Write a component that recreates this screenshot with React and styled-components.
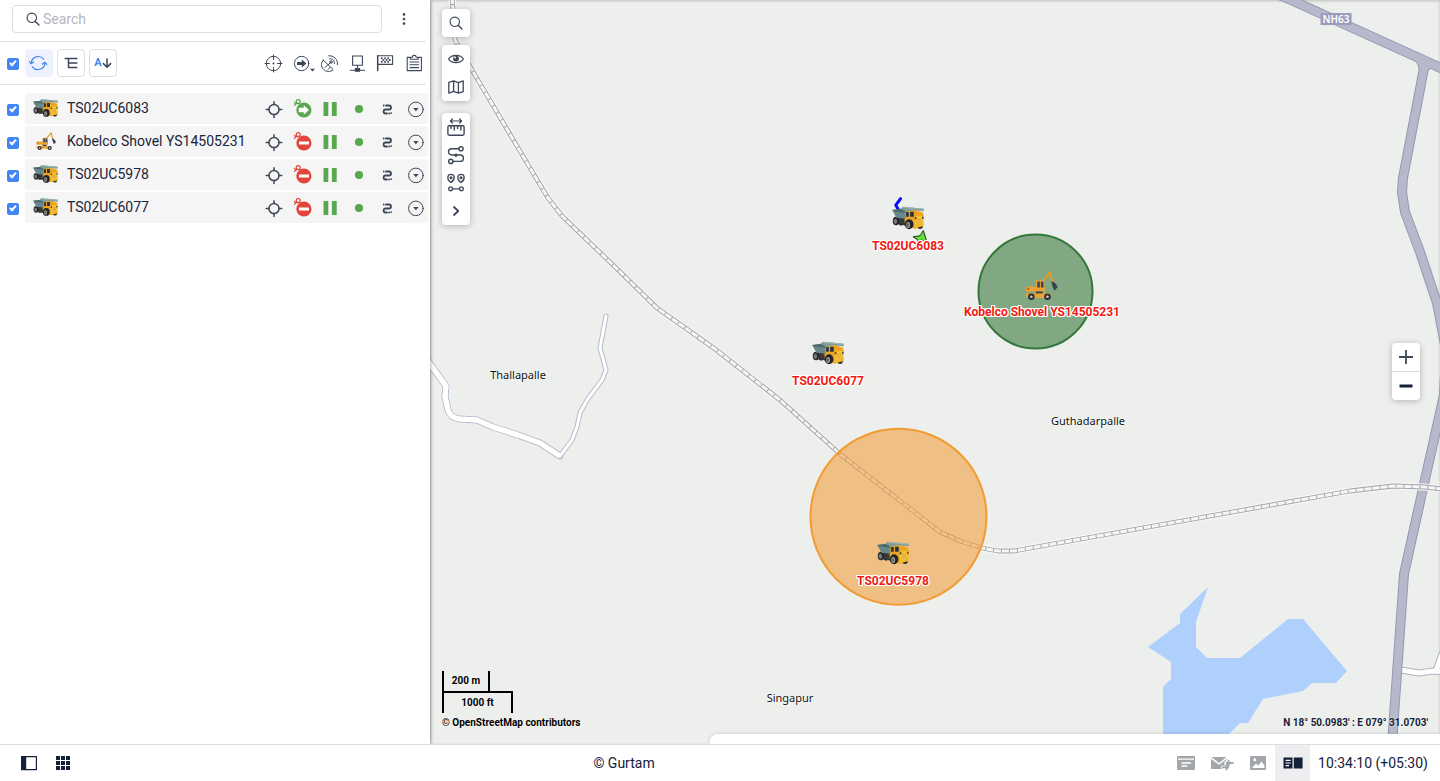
import React from 'react';
import styled, { createGlobalStyle, css } from 'styled-components';

const ink = '#3d4757';
const dark = '#14203a';
const blue = '#4285f4';
const green = '#57a84f';
const red = '#e2453a';

const GlobalStyle = createGlobalStyle`
  *, *::before, *::after { box-sizing: border-box; }
  body {
    margin: 0;
    font-family: Roboto, "Liberation Sans", sans-serif;
    font-size: 14px;
    line-height: 20px;
    color: ${dark};
    background: #fff;
  }
  button, input { font: inherit; color: inherit; }
`;

/* ---------- layout ---------- */

const Page = styled.div`
  display: grid;
  grid-template-rows: 1fr auto;
  height: 100vh;
`;

const Workspace = styled.main`
  display: grid;
  grid-template-columns: 430px 1fr;
  min-height: 0;
`;

const SidePanel = styled.aside`
  position: relative;
  z-index: 1;
  background: #fff;
  box-shadow: 0 0 4px rgba(0, 0, 0, 0.5);
`;

const SearchBar = styled.div`
  display: flex;
  align-items: center;
  gap: 8px;
  padding: 5px 8px 8px 12px;
  margin-right: 4px;
  border-bottom: 1px solid #e0e1e3;
`;

const SearchField = styled.label`
  display: flex;
  flex: 1;
  align-items: center;
  gap: 3px;
  height: 28px;
  padding: 0 13px;
  border: 1px solid #dedfe1;
  border-radius: 4px;
  color: ${ink};
`;

const SearchInput = styled.input`
  flex: 1;
  min-width: 0;
  padding: 0;
  border: 0;
  outline: 0;
  background: none;
  &::placeholder { color: #b4b7bc; opacity: 1; }
`;

const IconButton = styled.button`
  display: flex;
  align-items: center;
  justify-content: center;
  flex: none;
  width: 28px;
  height: 28px;
  padding: 0;
  border: 0;
  background: none;
  color: ${ink};
  cursor: pointer;
`;

const ToolButton = styled(IconButton)`
  border: 1px solid ${(p) => (p.$active ? '#edf2fe' : '#dedfe1')};
  border-radius: 4px;
  background: ${(p) => (p.$active ? '#edf2fe' : '#fff')};
  color: ${(p) => (p.$active ? blue : ink)};
`;

const Toolbar = styled.div`
  display: flex;
  align-items: center;
  padding: 7px 0 7px 7px;
  margin-right: 4px;
  border-bottom: 1px solid #e0e1e3;
`;

const ToolGroup = styled.div`
  display: flex;
  flex: 1;
  gap: 4px;
  margin-left: 6px;
`;

const Actions = styled.div`
  display: flex;
  flex: none;
  margin-right: ${(p) => (p.$header ? '-2px' : '0')};
`;

const Checkbox = styled.input`
  appearance: none;
  position: relative;
  flex: none;
  width: 12px;
  height: 12px;
  margin: 2px 0 0;
  border-radius: 2px;
  border: 1px solid ${blue};
  background: #fff;
  &:checked { background: ${blue}; }
  &:checked::after {
    content: '';
    position: absolute;
    left: 3px;
    top: 0;
    width: 4px;
    height: 7px;
    border: solid #fff;
    border-width: 0 2px 2px 0;
    transform: rotate(42deg);
  }
`;

const UnitList = styled.ul`
  display: flex;
  flex-direction: column;
  gap: 2px;
  margin: 0;
  padding: 8px 2px 0 7px;
  list-style: none;
`;

const UnitRow = styled.li`
  display: flex;
  align-items: center;
  gap: 6px;
`;

const UnitCard = styled.div`
  display: flex;
  flex: 1;
  align-items: center;
  height: 31px;
  padding-left: 8px;
  border-radius: 3px;
  background: #f5f5f5;
`;

const UnitName = styled.label`
  display: flex;
  flex: 1;
  align-items: center;
  gap: 9px;
  padding-bottom: 2px;
  color: #1b2438;
`;

/* ---------- map ---------- */

const MapArea = styled.section`
  position: relative;
  overflow: hidden;
  background: #edefec;
  box-shadow: inset 0 1px 3px rgba(0, 0, 0, 0.2);
`;

const MapDrawing = styled.svg`
  position: absolute;
  inset: 0;
  width: 100%;
  height: 100%;
`;

const Pin = styled.div`
  position: absolute;
  left: ${(p) => p.$x}px;
  top: ${(p) => p.$y}px;
  display: flex;
  flex-direction: column;
  align-items: center;
  transform: translateX(-50%);
  white-space: nowrap;
`;

const PinLabel = styled.span`
  margin-top: 4px;
  font-size: 12px;
  line-height: 16px;
  font-weight: 700;
  color: #f01a12;
  text-shadow: 1px 0 #fff, -1px 0 #fff, 0 1px #fff, 0 -1px #fff, 1px 1px #fff, -1px -1px #fff,
    1px -1px #fff, -1px 1px #fff;
`;

const PlaceLabel = styled.span`
  font-family: "Noto Sans", sans-serif;
  font-size: 11px;
  line-height: 16px;
  color: #111;
  text-shadow: 0 0 2px #fff, 0 0 2px #fff;
`;

const RoadShield = styled.span`
  padding: 0 2px;
  font-family: "Noto Sans", sans-serif;
  font-size: 10px;
  line-height: 12px;
  font-weight: 600;
  color: #fff;
  background: #9a9cbc;
`;

const MapTools = styled.div`
  position: absolute;
  left: 12px;
  top: 9px;
  display: flex;
  flex-direction: column;
`;

const ControlGroup = styled.div`
  display: flex;
  flex-direction: column;
  margin-bottom: ${(p) => p.$gap || 0}px;
  border-radius: 4px;
  background: #fff;
  box-shadow: 0 1px 6px rgba(0, 0, 0, 0.25);
`;

const ZoomControls = styled(ControlGroup)`
  position: absolute;
  right: 20px;
  top: calc(50% - 29px);
  ${IconButton} + ${IconButton} {
    height: 29px;
    border-top: 1px solid #dcdddf;
  }
`;

const MapCaption = styled.div`
  position: absolute;
  bottom: 13px;
  ${(p) => (p.$side === 'left' ? css`left: 12px;` : css`right: 12px;`)}
  font-size: 10px;
  line-height: 16px;
  font-weight: 700;
  color: ${(p) => (p.$side === 'left' ? '#000' : dark)};
  text-shadow: 0 0 2px #fff;
`;

const ScaleBar = styled.div`
  width: ${(p) => p.$width}px;
  height: ${(p) => (p.$lower ? 22 : 20)}px;
  border: solid #000;
  border-width: ${(p) => (p.$lower ? '2px 2px 0' : '0 2px')};
  line-height: 20px;
  text-align: center;
`;

const CaptionLink = styled.a`
  display: block;
  margin-top: 2px;
  color: inherit;
  text-decoration: none;
`;

const Drawer = styled.div`
  position: absolute;
  left: 280px;
  right: 0;
  bottom: 0;
  height: 10px;
  border-top-left-radius: 8px;
  background: #fff;
  box-shadow: 0 0 4px rgba(0, 0, 0, 0.15);
`;

/* ---------- footer ---------- */

const Footer = styled.footer`
  display: flex;
  align-items: stretch;
  justify-content: space-between;
  height: 37px;
  padding: 0 12px 0 15px;
  position: relative;
  z-index: 2;
  border-top: 1px solid #dddee1;
  background: #fff;
`;

const FooterGroup = styled.div`
  display: flex;
  align-items: center;
  gap: ${(p) => p.$gap || 0}px;
`;

const Copyright = styled(FooterGroup)`
  padding-left: 4px;
`;

const FooterButton = styled(IconButton)`
  width: ${(p) => (p.$active ? 35 : 36)}px;
  height: 100%;
  padding-left: ${(p) => (p.$active ? 0 : 2)}px;
  background: ${(p) => (p.$active ? '#eeeef0' : 'none')};
  color: ${(p) => (p.$active ? dark : '#a3a6ab')};
`;

const Clock = styled.time`
  margin-left: 8px;
`;

/* ---------- icons ---------- */

const Glyph = ({ size = 28, w, h, box, children, sw = 1.2 }) => (
  <svg
    width={w || size}
    height={h || size}
    viewBox={box || `0 0 ${w || size} ${h || size}`}
    fill="none"
    stroke="currentColor"
    strokeWidth={sw}
    strokeLinecap="round"
    strokeLinejoin="round"
    aria-hidden="true"
  >
    {children}
  </svg>
);

const headerBox = '0 -1 28 28';

const Magnifier = () => (
  <Glyph size={14} sw={1.1}>
    <circle cx="5.8" cy="5.8" r="4.7" />
    <path d="M9.4 9.4L13 13" strokeWidth="1.4" />
  </Glyph>
);

const Kebab = () => (
  <Glyph w={4} h={14}>
    <g fill="currentColor" stroke="none">
      <circle cx="2" cy="2.4" r="1.3" />
      <circle cx="2" cy="7" r="1.3" />
      <circle cx="2" cy="11.6" r="1.3" />
    </g>
  </Glyph>
);

const Refresh = () => (
  <Glyph size={20} box="1 0 20 20">
    <path d="M3.2 9.6A7 7 0 0 1 15.6 6.2M16.9 10.4A7 7 0 0 1 4.4 13.8" />
    <path d="M1.4 8.6L3.1 10.8L5.6 9M14.4 11L16.9 9.2L18.8 11.4" />
  </Glyph>
);

const Tree = () => (
  <Glyph size={20} sw={1.5}>
    <path d="M3.6 5.5H16.4M7.5 5.5V14.5H16.4M7.5 10H16.4" strokeLinecap="butt" />
  </Glyph>
);

const SortLetter = styled.span`
  font-size: 11px;
  line-height: 12px;
  font-weight: 700;
  color: ${blue};
`;

const SortArrow = () => (
  <Glyph w={10} h={12} sw={1.5}>
    <path d="M5 2V10M1.4 6.6L5 10.2L8.6 6.6" />
  </Glyph>
);

const Target = () => (
  <Glyph sw={1} box={headerBox}>
    <circle cx="13.5" cy="13.5" r="7.2" />
    <path d="M13.5 5V9.5M13.5 17.5V22M5 13.5H9.5M17.5 13.5H22" />
    <circle cx="13.5" cy="13.5" r="1" fill="currentColor" stroke="none" />
  </Glyph>
);

const Follow = () => (
  <Glyph sw={1} box={headerBox}>
    <circle cx="13.6" cy="13.5" r="7.2" />
    <path d="M9 12H13.8V9.6L18.4 13.5L13.8 17.4V15H9Z" fill="currentColor" stroke="none" />
    <path d="M22 18.8H27L24.5 21.4Z" fill="currentColor" stroke="none" />
  </Glyph>
);

const Satellite = () => (
  <Glyph sw={1} box={headerBox}>
    <path d="M7.2 10.2L17.2 19.6C14.4 22.4 10 21.9 7.4 19.2C4.8 16.6 4.7 12.8 7.2 10.2Z" />
    <path d="M9.2 17.4L11.4 15.2M12 19.4L14 17.4M12.2 14.8L14.6 12.4" />
    <circle cx="15" cy="12" r="1.2" />
    <path d="M13.6 8.8C16.6 8.2 19 10.8 18.4 13.6M12.6 5.8C17.6 5 22.4 9.8 21.4 14.6" />
  </Glyph>
);

const Network = () => (
  <Glyph sw={1.1} box={headerBox}>
    <path d="M8.6 6H18.4V15.2H8.6Z" />
    <path d="M13.5 15.2V18M6.4 20.3H11.4M15.6 20.3H20.6" />
    <path d="M11.4 18.5H15.6V21.2H11.4Z" fill="currentColor" />
  </Glyph>
);

const CheckeredFlag = () => (
  <Glyph sw={1.1} box={headerBox}>
    <path d="M5.7 5.8V20.6" strokeWidth="1.5" />
    <path d="M5.7 5.8H20.6V14.4H5.7" />
    <g fill="currentColor" stroke="none">
      {[0, 1, 2].map((r) =>
        [0, 1, 2].map((c) => (
          <rect key={`${r}${c}`} x={9 + c * 3.2 + (r % 2) * 1.6} y={7.4 + r * 1.8} width="1.6" height="1.8" />
        ))
      )}
    </g>
  </Glyph>
);

const Clipboard = () => (
  <Glyph sw={1.1} box={headerBox}>
    <path d="M10.4 7.4H7.2V20.6H21.4V7.4H18.2M10.4 9.2V7.2H12.4C12.4 4.8 16.2 4.8 16.2 7.2H18.2V9.2Z" />
    <path d="M10 12H18.6M10 14.8H18.6M10 17.6H18.6" />
  </Glyph>
);

const Locate = () => (
  <Glyph sw={1.5}>
    <circle cx="14" cy="14.6" r="5" />
    <path d="M14 6.8V9.6M14 19.6V22.4M6.2 14.6H9M19 14.6H21.8" />
  </Glyph>
);

const StatusGlyph = ({ moving }) => (
  <Glyph>
    <g stroke={moving ? green : red}>
      <circle cx="10.2" cy="6.6" r="2" />
      <path d="M8.7 8.2L6.4 10.4M6.4 7.4L8 9.2" />
    </g>
    <circle cx="15.9" cy="15" r="7.6" fill={moving ? green : red} stroke="none" />
    {moving ? (
      <path d="M10.8 12.8H15.8V10.2L21 15L15.8 19.8V17.2H10.8Z" fill="#fff" stroke="none" />
    ) : (
      <rect x="11" y="13.5" width="10" height="3" fill="#fff" stroke="none" />
    )}
  </Glyph>
);

const Pause = () => (
  <Glyph>
    <path d="M7.5 7H12.3V21H7.5ZM15.9 7H20.7V21H15.9Z" fill={green} stroke="none" />
  </Glyph>
);

const Dot = () => (
  <Glyph>
    <circle cx="15" cy="14" r="4.1" fill={green} stroke="none" />
  </Glyph>
);

const Track = () => (
  <Glyph sw={1.8}>
    <path d="M14 10.5H17A2 2 0 0 1 17 14.5H13.6A2 2 0 0 0 13.6 18.5H15" />
    <g fill="currentColor" stroke="none">
      <circle cx="11.7" cy="10.5" r=".9" />
      <circle cx="17.2" cy="18.5" r=".9" />
      <circle cx="19.2" cy="18.1" r=".9" />
    </g>
  </Glyph>
);

const More = () => (
  <Glyph sw={1}>
    <circle cx="15.9" cy="14.4" r="7.3" />
    <path d="M13.2 13H18.6L15.9 16.2Z" fill="currentColor" stroke="none" />
  </Glyph>
);

const Eye = () => (
  <Glyph size={18} sw={1.3}>
    <path d="M1.6 9C4.6 4.2 13.4 4.2 16.4 9C13.4 13.8 4.6 13.8 1.6 9Z" />
    <circle cx="9" cy="8.6" r="2.9" fill="currentColor" stroke="none" />
    <circle cx="8" cy="7.6" r="1" fill="#fff" stroke="none" />
  </Glyph>
);

const FoldedMap = () => (
  <Glyph size={18} sw={1.3}>
    <path d="M1.8 4.4L6.6 2.8L11.4 4.6L16.2 2.8V13.6L11.4 15.2L6.6 13.4L1.8 15.2ZM6.6 2.8V13.4M11.4 4.6V15.2" />
  </Glyph>
);

const Ruler = () => (
  <Glyph size={22} sw={1.4}>
    <path d="M5.6 5H16.4M7.4 3L5.4 5L7.4 7M14.6 3L16.6 5L14.6 7" strokeWidth="1.2" />
    <rect x="2.9" y="9.8" width="16.2" height="9.4" rx="1.4" />
    <path d="M6 10V13M9.3 10V14.4M12.6 10V13M15.9 10V14.4" strokeLinecap="butt" />
  </Glyph>
);

const Route = () => (
  <Glyph size={20} sw={1.4}>
    <circle cx="15" cy="3.8" r="2.1" />
    <circle cx="4.8" cy="16.4" r="2.1" />
    <path d="M12.8 3.8H5.6A3.1 3.1 0 0 0 5.6 10H14.2A3.2 3.2 0 0 1 14.2 16.4H7" />
    <path d="M8.6 10.2L10 8.6L11.4 10.2L10 11.8Z" fill="currentColor" strokeWidth=".8" />
  </Glyph>
);

const Waypoints = () => (
  <Glyph size={22} sw={1.3} box="0 -1 22 22">
    {[6, 16].map((x) => (
      <g key={x}>
        <path d={`M${x} 9.6C${x - 5.2} 5.6 ${x - 3.2} 1.4 ${x} 1.4C${x + 3.2} 1.4 ${x + 5.2} 5.6 ${x} 9.6Z`} />
        <circle cx={x} cy="4.8" r=".9" fill="currentColor" />
        <circle cx={x === 6 ? 5.6 : 16.4} cy="15.8" r="1.9" />
      </g>
    ))}
    <path d="M7.6 15.8H14.4" />
  </Glyph>
);

const Chevron = () => (
  <Glyph size={14} sw={1.8}>
    <path d="M5 3L9.2 7L5 11" />
  </Glyph>
);

const Plus = () => (
  <Glyph size={14} sw={1.8}>
    <path d="M0 7H14M7 0V14" strokeLinecap="butt" />
  </Glyph>
);

const Minus = () => (
  <Glyph size={14} sw={3}>
    <path d="M.5 7H13.5" stroke={dark} strokeLinecap="butt" />
  </Glyph>
);

const PanelGlyph = () => (
  <Glyph size={16} sw={1.2}>
    <rect x=".6" y="1.6" width="14.8" height="13" stroke={dark} />
    <rect x=".6" y="1.6" width="4.6" height="13" fill={dark} stroke="none" />
  </Glyph>
);

const AppsGlyph = () => (
  <Glyph size={14}>
    <g fill={dark} stroke="none">
      {[0, 5, 10].map((y) => [0, 5, 10].map((x) => <rect key={`${x}-${y}`} x={x} y={y} width="4" height="4" />))}
    </g>
  </Glyph>
);

const NoteGlyph = () => (
  <Glyph w={18} h={16}>
    <rect x="0" y="1" width="18" height="14" rx="1" fill="currentColor" stroke="none" />
    <path d="M1 4.2H17M4.6 8H14M4.6 11H10.4" stroke="#fff" strokeLinecap="butt" strokeWidth="1.3" />
  </Glyph>
);

const MailGlyph = () => (
  <Glyph w={24} h={16}>
    <path d="M1 2H17V14H1Z" fill="currentColor" stroke="none" />
    <path d="M1 2.6L9 9L17 2.6" stroke="#fff" strokeWidth="1.6" />
    <path d="M24 8H16M19 5L16 8L19 11M12.6 12.2H19M16 9L19.4 12.2L16 15.6" stroke="#fff" strokeWidth="3.2" />
    <path d="M22.8 8H17M18.8 6L16.8 8L18.8 10M12.8 12.2H18M16.2 10.2L18.4 12.2L16.2 14.4" strokeWidth="1.8" />
  </Glyph>
);

const ImageGlyph = () => (
  <Glyph size={16}>
    <rect x="0" y="1" width="16" height="14" rx="1" fill="currentColor" stroke="none" />
    <path d="M2 13L6 8.4L8.2 10.6L11.6 6.6L14.4 10.4V13Z" fill="#fff" stroke="none" />
    <circle cx="4.8" cy="4.8" r="1.5" fill="#fff" stroke="none" />
  </Glyph>
);

const SplitGlyph = () => (
  <Glyph w={20} h={14}>
    <path d="M.5 1.5H9.5V12.5H.5ZM10.8 1.5H19.6V12.5H10.8Z" fill="currentColor" stroke="none" />
    <path d="M2.6 4.4H7.6M2.6 7H7.6M2.6 9.6H6" stroke="#fff" strokeLinecap="butt" strokeWidth="1.1" />
  </Glyph>
);

const Truck = ({ w, h }) => (
  <svg width={w} height={h} viewBox="0 0 96 72" aria-hidden="true">
    <ellipse cx="27" cy="49" rx="8" ry="10" fill="#2b2b2e" />
    <path d="M12 34L44 32L48 62L24 54Z" fill="#39393a" />
    <ellipse cx="12" cy="45" rx="10" ry="13" fill="#2a2a2d" />
    <ellipse cx="10" cy="46" rx="5" ry="8" fill="#777b7d" />
    <path d="M36 14L68 12L93 20L95 34L93 64L66 68L38 52Z" fill="#eda51f" />
    <path d="M68 32L92 29L94 60L68 66Z" fill="#f6c632" />
    <path d="M0 12L24 9L34 2L40 12L40 38L13 35Z" fill="#69878a" />
    <path d="M0 12L24 9L40 15L40 20L10 17Z" fill="#4d6a6b" />
    <path d="M26 8L35 2L95 8L95 16L62 13L42 17Z" fill="#7f9c9a" />
    <path d="M35 2L95 8L94 11L34 6Z" fill="#9db5b1" />
    <path d="M42 18H50V32H42ZM54 17H65V32H54Z" fill="#283446" />
    <path d="M74 38H88V56L74 59Z" fill="#dda032" />
    <path d="M74 43H88M74 48H88M74 53H88" stroke="#f6d368" strokeWidth="2" />
    <path d="M68 34H73V40H68ZM90 32H94V38H90Z" fill="#3c3a35" />
    <ellipse cx="84" cy="63" rx="8" ry="6" fill="#303032" />
    <path d="M66 56L94 52V60L70 67Z" fill="#f0b92a" />
    <ellipse cx="51" cy="55" rx="13" ry="15" fill="#242427" />
    <ellipse cx="48" cy="57" rx="6" ry="9" fill="#9a9c98" />
    <ellipse cx="47" cy="57" rx="3" ry="5" fill="#55585a" />
  </svg>
);

const Excavator = ({ w, h }) => (
  <svg width={w} height={h} viewBox="0 0 98 88" aria-hidden="true">
    <path d="M50 34L74 4L82 34" fill="none" stroke="#e49a2d" strokeWidth="6" strokeLinejoin="round" />
    <path d="M78 31L87 34Q98 44 97 50L88 60L82 46Z" fill="#3a4250" />
    <path d="M2 52Q2 47 8 47H32V28H56Q59 40 59 62H2Z" fill="#eba336" />
    <path d="M36 32H44V50H36ZM47 32H54L56 50H47Z" fill="#39495c" />
    <circle cx="9" cy="54" r="3" fill="#b8482c" />
    <path d="M32 62H52V70H32Z" fill="#4a4438" />
    <path d="M2 68H77V75L72 82H6L2 76Z" fill="#eba336" />
    <circle cx="18" cy="78" r="10" fill="#2d2f33" />
    <circle cx="18" cy="78" r="4" fill="#c9cac8" />
    <circle cx="67" cy="78" r="10" fill="#2d2f33" />
    <circle cx="67" cy="78" r="4" fill="#c9cac8" />
  </svg>
);

/* ---------- map drawing ---------- */

const RAIL =
  'M22 -4L25 40L42 70L100 168L118 198L132 216L180 262L227 308L285 349L350 400L410 454L510 532L530 541L552 548L568 551L584 551L920 491L963 486L995 487L1030 491';
const NH = 'M842 -8L861 0L989 58L1030 77';
const TRUNK =
  'M994 60L994 68L973 178L972 192L975 212L990 252L1007 303L1016 350L1014 395L994 484L974 574L962 744';
const VILLAGE =
  'M-6 355L0 364L16 386L15 397L18 410Q20 418 30 419L47 420L63 427L88 435L110 443L130 456';
const LANE = 'M130 456L142 440L147 427L150 413L157 400L172 380L176 370L170 348L176 316';
const SPUR = 'M971 670L989 673L1003 671L1030 673M1006 671L1012 654';
const LAKE =
  'M778 587L766 622V647L777 658H810L858 619H873L917 671L906 683H882L873 691L833 699L818 723H810L799 734L790 744H733V687L741 679V662L718 647L750 623V614Z';

const Road = ({ d, width, fill, casing }) => (
  <g fill="none" strokeLinejoin="round" strokeLinecap="round">
    <path d={d} stroke={casing} strokeWidth={width + 2} />
    <path d={d} stroke={fill} strokeWidth={width} />
  </g>
);

const MapCanvas = () => (
  <MapDrawing aria-hidden="true">
    <path d={LAKE} fill="#afcffc" />
    <Road d={VILLAGE} width={5} fill="#fff" casing="#b9bbcc" />
    <Road d={LANE} width={3} fill="#fff" casing="#b9bbcc" />
    <path d={VILLAGE} fill="none" stroke="#fff" strokeWidth="5" strokeLinejoin="round" />
    <Road d={SPUR} width={5} fill="#fff" casing="#b0b2c4" />
    <g fill="none" strokeLinejoin="round">
      <path d={TRUNK} stroke="#9498b2" strokeWidth="10" />
      <path d={NH} stroke="#9498b2" strokeWidth="10" />
      <path d="M984 60Q988 62 989 69L999 70Q1000 67 1004 68L994 60Z" fill="#b6b9cb" stroke="#9498b2" strokeWidth="1" />
      <path d={TRUNK} stroke="#b6b9cb" strokeWidth="8" />
      <path d={NH} stroke="#b6b9cb" strokeWidth="8" />
    </g>
    <g fill="none" strokeLinejoin="round">
      <path d={RAIL} stroke="#f8f8f8" strokeWidth="7" />
      <path d={RAIL} stroke="#a3a2a8" strokeWidth="4.8" />
      <path d={RAIL} stroke="#f6f6f6" strokeWidth="3" />
      <path d={RAIL} stroke="#a3a2a8" strokeWidth="3" strokeDasharray="1 7" />
    </g>
    <circle cx="605.5" cy="291.5" r="57" fill="rgba(46,112,48,.56)" stroke="#33783a" strokeWidth="2" />
    <circle cx="468.5" cy="516.8" r="88" fill="rgba(243,153,50,.56)" stroke="#f29b33" strokeWidth="2" />
    <path d="M470.6 198.6L465.8 205.2L468.6 210" fill="none" stroke="#0a0aff" strokeWidth="3" strokeLinecap="round" strokeLinejoin="round" />
    <path d="M493.3 230.5L497 242L491 240L486 243L488 240L483 236.8L490 235.8Z" fill="#5fe03a" stroke="#1f3a1c" strokeWidth="1" />
  </MapDrawing>
);

/* ---------- data ---------- */

const units = [
  { id: 'TS02UC6083', kind: 'truck', moving: true, x: 478, y: 206 },
  { id: 'Kobelco Shovel YS14505231', kind: 'shovel', moving: false, x: 612, y: 271 },
  { id: 'TS02UC5978', kind: 'truck', moving: false, x: 463, y: 541 },
  { id: 'TS02UC6077', kind: 'truck', moving: false, x: 398, y: 341 },
];

const places = [
  { name: 'Thallapalle', x: 88, y: 367 },
  { name: 'Guthadarpalle', x: 658, y: 413 },
  { name: 'Singapur', x: 360, y: 690 },
];

const headerActions = [
  ['Monitoring', Target],
  ['Follow', Follow],
  ['Connection', Satellite],
  ['Network', Network],
  ['Sensors', CheckeredFlag],
  ['Report', Clipboard],
];

const IconSlot = styled.span`
  display: flex;
  justify-content: center;
  width: 25px;
`;

const PinIcon = styled.span`
  display: flex;
  align-items: flex-start;
  min-height: 28px;
`;

function Unit({ unit }) {
  return (
    <UnitRow>
      <Checkbox type="checkbox" id={unit.id} defaultChecked />
      <UnitCard>
        <UnitName htmlFor={unit.id}>
          <IconSlot>{unit.kind === 'truck' ? <Truck w={25} h={20} /> : <Excavator w={20} h={18} />}</IconSlot>
          {unit.id}
        </UnitName>
        <Actions>
          <IconButton aria-label="Locate"><Locate /></IconButton>
          <IconButton aria-label="Motion state"><StatusGlyph moving={unit.moving} /></IconButton>
          <IconButton aria-label="Pause"><Pause /></IconButton>
          <IconButton aria-label="Online"><Dot /></IconButton>
          <IconButton aria-label="Track"><Track /></IconButton>
          <IconButton aria-label="More"><More /></IconButton>
        </Actions>
      </UnitCard>
    </UnitRow>
  );
}

export default function App() {
  return (
    <Page>
      <GlobalStyle />
      <Workspace>
        <SidePanel>
          <SearchBar>
            <SearchField>
              <Magnifier />
              <SearchInput type="text" placeholder="Search" aria-label="Search" />
            </SearchField>
            <IconButton aria-label="Menu"><Kebab /></IconButton>
          </SearchBar>
          <Toolbar>
            <Checkbox type="checkbox" aria-label="Select all" defaultChecked />
            <ToolGroup>
              <ToolButton $active aria-label="Refresh"><Refresh /></ToolButton>
              <ToolButton aria-label="Group"><Tree /></ToolButton>
              <ToolButton aria-label="Sort">
                <SortLetter>A</SortLetter>
                <SortArrow />
              </ToolButton>
            </ToolGroup>
            <Actions $header>
              {headerActions.map(([label, Icon]) => (
                <IconButton key={label} aria-label={label}><Icon /></IconButton>
              ))}
            </Actions>
          </Toolbar>
          <UnitList>
            {units.map((u) => <Unit key={u.id} unit={u} />)}
          </UnitList>
        </SidePanel>

        <MapArea>
          <MapCanvas />
          {places.map((p) => (
            <Pin key={p.name} $x={p.x} $y={p.y}><PlaceLabel>{p.name}</PlaceLabel></Pin>
          ))}
          <Pin $x={906} $y={13}><RoadShield>NH63</RoadShield></Pin>
          {units.map((u) => (
            <Pin key={u.id} $x={u.x} $y={u.y}>
              <PinIcon>{u.kind === 'truck' ? <Truck w={32} h={24} /> : <Excavator w={33} h={29} />}</PinIcon>
              <PinLabel>{u.id}</PinLabel>
            </Pin>
          ))}
          <MapTools>
            <ControlGroup $gap={8}>
              <IconButton aria-label="Find on map"><Magnifier /></IconButton>
            </ControlGroup>
            <ControlGroup $gap={12}>
              <IconButton aria-label="Visible layers"><Eye /></IconButton>
              <IconButton aria-label="Map source"><FoldedMap /></IconButton>
            </ControlGroup>
            <ControlGroup>
              <IconButton aria-label="Measure"><Ruler /></IconButton>
              <IconButton aria-label="Routing"><Route /></IconButton>
              <IconButton aria-label="Nearest units"><Waypoints /></IconButton>
              <IconButton aria-label="More tools"><Chevron /></IconButton>
            </ControlGroup>
          </MapTools>
          <ZoomControls>
            <IconButton aria-label="Zoom in"><Plus /></IconButton>
            <IconButton aria-label="Zoom out"><Minus /></IconButton>
          </ZoomControls>
          <MapCaption $side="left">
            <ScaleBar $width={48}>200 m</ScaleBar>
            <ScaleBar $width={71} $lower>1000 ft</ScaleBar>
            <CaptionLink href="#osm">© OpenStreetMap contributors</CaptionLink>
          </MapCaption>
          <MapCaption $side="right">N 18° 50.0983' : E 079° 31.0703'</MapCaption>
          <Drawer />
        </MapArea>
      </Workspace>

      <Footer>
        <FooterGroup $gap={6}>
          <IconButton aria-label="Toggle panel"><PanelGlyph /></IconButton>
          <IconButton aria-label="Applications"><AppsGlyph /></IconButton>
        </FooterGroup>
        <Copyright>© Gurtam</Copyright>
        <FooterGroup>
          <FooterButton aria-label="Notifications"><NoteGlyph /></FooterButton>
          <FooterButton aria-label="Messages"><MailGlyph /></FooterButton>
          <FooterButton aria-label="Media"><ImageGlyph /></FooterButton>
          <FooterButton $active aria-label="Log"><SplitGlyph /></FooterButton>
          <Clock>10:34:10 (+05:30)</Clock>
        </FooterGroup>
      </Footer>
    </Page>
  );
}
